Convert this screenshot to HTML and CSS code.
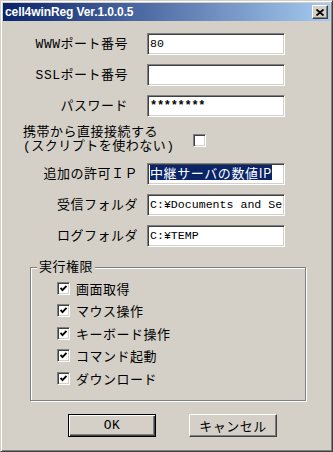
FILE: index.html
```html
<!DOCTYPE html>
<html lang="ja">
<head>
    <meta charset="UTF-8">
    <meta name="viewport" content="width=device-width, initial-scale=1.0">
    <title>cell4winReg Ver.1.0.0.5</title>
    <link rel="stylesheet" href="styles.css">
</head>
<body>
    <div class="window">
        <div class="title-bar">
            <span class="title">cell4winReg Ver.1.0.0.5</span>
            <button class="close-btn">
                <svg width="8" height="7" viewBox="0 0 8 7">
                    <path d="M0.5 0.5 L7.5 6.5 M7.5 0.5 L0.5 6.5" stroke="#000" stroke-width="1.8" fill="none"/>
                </svg>
            </button>
        </div>

        <div class="dialog">
            <!-- 設定項目 -->
            <div class="form">
                <div class="row">
                    <label class="label label-short">WWWポート番号</label>
                    <div class="textbox">80</div>
                </div>
                <div class="row">
                    <label class="label label-short">SSLポート番号</label>
                    <div class="textbox"></div>
                </div>
                <div class="row">
                    <label class="label label-short">パスワード</label>
                    <div class="textbox password">********</div>
                </div>
                <div class="row-check">
                    <div class="check-text">携帯から直接接続する<br>(スクリプトを使わない)</div>
                    <span class="checkbox"></span>
                </div>
                <div class="row">
                    <label class="label">追加の許可ＩＰ</label>
                    <div class="textbox"><span class="selected">中継サーバの数値IP</span></div>
                </div>
                <div class="row">
                    <label class="label">受信フォルダ</label>
                    <div class="textbox">C:¥Documents and Se</div>
                </div>
                <div class="row">
                    <label class="label">ログフォルダ</label>
                    <div class="textbox">C:¥TEMP</div>
                </div>
            </div>

            <!-- 実行権限 -->
            <div class="group">
                <div class="group-title">実行権限</div>
                <div class="options">
                    <div class="option"><span class="checkbox"><svg width="7" height="7" viewBox="0 0 7 7"><path d="M0.5 3 L2.5 5.2 L6.5 1" stroke="#000" stroke-width="1.9" fill="none"/></svg></span>画面取得</div>
                    <div class="option"><span class="checkbox"><svg width="7" height="7" viewBox="0 0 7 7"><path d="M0.5 3 L2.5 5.2 L6.5 1" stroke="#000" stroke-width="1.9" fill="none"/></svg></span>マウス操作</div>
                    <div class="option"><span class="checkbox"><svg width="7" height="7" viewBox="0 0 7 7"><path d="M0.5 3 L2.5 5.2 L6.5 1" stroke="#000" stroke-width="1.9" fill="none"/></svg></span>キーボード操作</div>
                    <div class="option"><span class="checkbox"><svg width="7" height="7" viewBox="0 0 7 7"><path d="M0.5 3 L2.5 5.2 L6.5 1" stroke="#000" stroke-width="1.9" fill="none"/></svg></span>コマンド起動</div>
                    <div class="option"><span class="checkbox"><svg width="7" height="7" viewBox="0 0 7 7"><path d="M0.5 3 L2.5 5.2 L6.5 1" stroke="#000" stroke-width="1.9" fill="none"/></svg></span>ダウンロード</div>
                </div>
            </div>

            <div class="buttons">
                <button class="btn btn-default">OK</button>
                <button class="btn">キャンセル</button>
            </div>
        </div>
    </div>
</body>
</html>
```

FILE: styles.css
```css
* {
    margin: 0;
    padding: 0;
    box-sizing: border-box;
}

body {
    background-color: #d4d0c8;
    font-family: "Liberation Mono", "Noto Sans CJK JP", monospace;
    font-size: 13px;
    letter-spacing: 0.5px;
    color: #000;
}

.window {
    width: 333px;
    height: 452px;
    padding: 2px;
    border: 1px solid;
    border-color: #d4d0c8 #404040 #404040 #d4d0c8;
    box-shadow: inset 1px 1px 0 #fff, inset -1px -1px 0 #808080;
    background-color: #d4d0c8;
    display: flex;
    flex-direction: column;
}

.title-bar {
    height: 18px;
    display: flex;
    justify-content: space-between;
    align-items: center;
    padding: 0 2px;
    background: linear-gradient(to right, #0a246a, #a6caf0);
}

.title {
    font-family: "Liberation Sans", Arial, sans-serif;
    font-weight: bold;
    font-size: 12px;
    letter-spacing: -0.1px;
    color: #fff;
}

.close-btn {
    width: 16px;
    height: 14px;
    display: flex;
    align-items: center;
    justify-content: center;
    border: 1px solid;
    border-color: #fff #404040 #404040 #fff;
    box-shadow: inset -1px -1px 0 #808080;
    background-color: #d4d0c8;
}

.form {
    display: flex;
    flex-direction: column;
    gap: 9px;
    padding-top: 12px;
}

.row {
    display: grid;
    grid-template-columns: 135px 138px;
    column-gap: 9px;
    align-items: center;
    height: 22px;
}

.label {
    text-align: right;
    line-height: 15px;
}

.label-short {
    padding-right: 10px;
}

.textbox {
    height: 22px;
    padding: 0 1px 0 2px;
    border: 1px solid;
    border-color: #808080 #fff #fff #808080;
    box-shadow: inset 1px 1px 0 #404040, inset -1px -1px 0 #d4d0c8;
    background-color: #fff;
    font-family: "Liberation Mono", "Noto Sans CJK JP", monospace;
    font-size: 11.6px;
    letter-spacing: 0;
    line-height: 20px;
    white-space: nowrap;
    overflow: hidden;
}

.password {
    font-size: 12px;
    font-weight: bold;
    letter-spacing: -0.3px;
}

.selected {
    display: inline-block;
    vertical-align: middle;
    margin-top: -2px;
    background-color: #0a246a;
    color: #fff;
    font-family: "Noto Sans CJK JP", sans-serif;
    font-size: 13px;
    letter-spacing: 0.6px;
    line-height: 15px;
}

.row-check {
    display: flex;
    align-items: center;
    height: 28px;
    padding-left: 20px;
}

.check-text {
    width: 170px;
    line-height: 14px;
}

.checkbox {
    width: 13px;
    height: 13px;
    flex-shrink: 0;
    display: flex;
    align-items: center;
    justify-content: center;
    border: 1px solid;
    border-color: #808080 #fff #fff #808080;
    box-shadow: inset 1px 1px 0 #404040, inset -1px -1px 0 #d4d0c8;
    background-color: #fff;
}

.group {
    width: 276px;
    height: 134px;
    margin: 20px 0 0 27px;
    border: 1px solid #808080;
    box-shadow: 1px 1px 0 #fff, inset 1px 1px 0 #fff;
}

.group-title {
    width: fit-content;
    margin: -8px 0 0 6px;
    padding: 0 2px;
    line-height: 15px;
    background-color: #d4d0c8;
}

.options {
    margin-top: 2px;
    padding-left: 26px;
}

.option {
    height: 22.5px;
    display: flex;
    align-items: center;
    gap: 6px;
}

.buttons {
    display: flex;
    gap: 33px;
    margin-top: 13px;
    padding-left: 65px;
}

.btn {
    width: 88px;
    height: 23px;
    border: 1px solid;
    border-color: #fff #404040 #404040 #fff;
    box-shadow: inset -1px -1px 0 #808080;
    background-color: #d4d0c8;
    font-family: inherit;
    font-size: 13px;
    letter-spacing: 0.5px;
    color: #000;
}

.btn-default {
    border-color: #000;
    box-shadow: inset 1px 1px 0 #fff, inset -1px -1px 0 #404040, inset -2px -2px 0 #808080;
}
```
